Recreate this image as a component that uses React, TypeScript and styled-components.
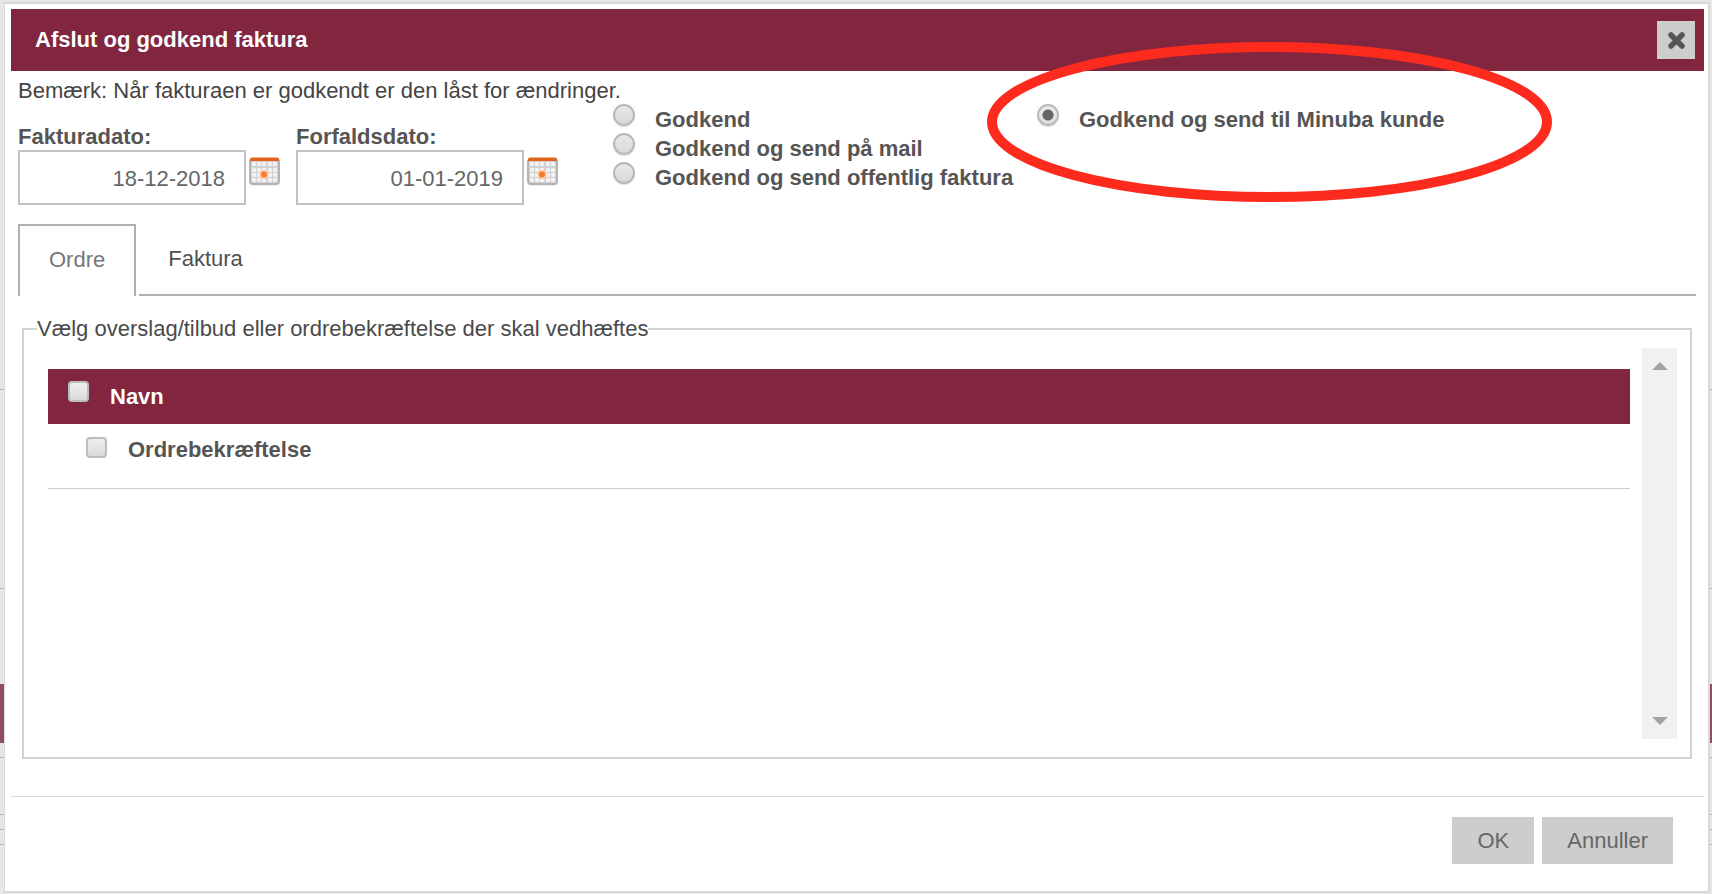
import React, { useState } from "react";
import styled, { createGlobalStyle, css } from "styled-components";

const maroon = "#82253f";

const GlobalStyle = createGlobalStyle`
  *, *::before, *::after { box-sizing: border-box; }
  body {
    margin: 0;
    background: #e6e6e6;
    color: #555;
    font-family: "Liberation Sans", Arial, sans-serif;
    font-size: 22px;
    line-height: 26px;
  }
  button, input { font: inherit; color: inherit; }
`;

const Screen = styled.div`
  display: grid;
  min-height: 100vh;
  > * { grid-area: 1 / 1; }
`;

const Backdrop = styled.div`
  display: flex;
  flex-direction: column;
  overflow: hidden;
`;

const BackdropRow = styled.div<{ $height: number; $kind?: "filled" | "plain" }>`
  flex: none;
  height: ${(p) => p.$height}px;
  ${(p) => p.$kind === "filled" && css`background: #904d61;`}
  ${(p) => !p.$kind && css`border-bottom: 1px solid #b4b4b4;`}
`;

const Dialog = styled.section`
  display: flex;
  flex-direction: column;
  margin: 2px 2px 1px 4px;
  padding: 5px 4px 0 6px;
  border: 2px solid #d8d8d8;
  border-left-width: 1px;
  background: #fff;
`;

const TitleBar = styled.header`
  display: flex;
  align-items: center;
  justify-content: space-between;
  height: 62px;
  padding: 0 9px 0 24px;
  background: ${maroon};
  color: #fff;
`;

const Title = styled.h1`
  margin: 0;
  font-size: 22px;
  font-weight: bold;
`;

const CloseButton = styled.button`
  display: grid;
  place-items: center;
  width: 38px;
  height: 38px;
  padding: 0;
  border: 0;
  background: #cdcdcd;
  color: #555;
`;

const Body = styled.div`
  display: flex;
  flex: 1;
  flex-direction: column;
  padding: 7px 8px 0 7px;
`;

const Note = styled.p`
  margin: 0;
  color: #444;
`;

const Settings = styled.div`
  display: flex;
  gap: 54px;
`;

const Dates = styled.div`
  display: flex;
  gap: 15px;
  padding-top: 20px;
`;

const DateField = styled.div`
  display: flex;
  flex-direction: column;
`;

const DateLabel = styled.label`
  font-weight: bold;
`;

const DateControl = styled.div`
  display: flex;
  align-items: flex-start;
  gap: 3px;
`;

const DateInput = styled.input`
  width: 228px;
  height: 55px;
  padding: 3px 19px 0 8px;
  border: 2px solid #c2c2c2;
  background: #fff;
  color: #666;
  text-align: right;
`;

const CalendarButton = styled.button`
  display: block;
  width: 32px;
  height: 36px;
  padding: 4px 0 0;
  border: 0;
  background: none;
  svg { display: block; }
`;

const Options = styled.div`
  display: grid;
  grid-template-columns: 424px auto;
  align-content: start;
`;

const OptionColumn = styled.div`
  display: flex;
  flex-direction: column;
`;

const Option = styled.label`
  position: relative;
  display: flex;
  align-items: flex-start;
  gap: 20px;
  height: 29px;
  font-weight: bold;
  white-space: nowrap;
`;

const OptionText = styled.span`
  padding-top: 3px;
`;

const Radio = styled.input`
  flex: none;
  appearance: none;
  width: 22px;
  height: 22px;
  margin: 0;
  border: 2px solid #b8b8b8;
  border-radius: 50%;
  background: linear-gradient(#e8e8e8, #d9d9d9);
  box-shadow: 0 1px 1px #ddd;
  &:checked {
    background:
      radial-gradient(circle, #666 5px, transparent 6px),
      linear-gradient(#eee, #dedede);
  }
`;

const Highlight = styled.svg`
  position: absolute;
  top: -62px;
  left: -50px;
  pointer-events: none;
`;

const TabList = styled.div`
  display: flex;
  height: 72px;
  margin-top: 19px;
`;

const Tab = styled.button<{ $active: boolean }>`
  padding: 0 29px;
  border: 0 solid #b0b0b0;
  background: none;
  color: #505050;
  border-bottom-width: 2px;
  ${(p) =>
    p.$active &&
    css`
      margin-right: 3px;
      padding: 0 29px 2px;
      border-width: 2px 2px 0;
      color: #777;
    `}
`;

const TabRule = styled.div`
  flex: 1;
  border-bottom: 2px solid #b0b0b0;
`;

const Attachments = styled.fieldset`
  display: flex;
  flex: 1;
  flex-direction: column;
  min-width: 0;
  margin: 20px 4px 0;
  padding: 6px 13px 18px;
  border: 2px solid #d2d2d2;
`;

const Legend = styled.legend`
  padding: 0;
  color: #4a4a4a;
`;

const ScrollArea = styled.div`
  display: flex;
  flex: 1;
  gap: 12px;
  padding-left: 11px;
`;

const DocumentTable = styled.table`
  flex: 1;
  align-self: flex-start;
  margin-top: 21px;
  border-collapse: collapse;
  font-weight: bold;
  text-align: left;
`;

const HeadCell = styled.th`
  height: 55px;
  padding: 12px 20px 0;
  background: ${maroon};
  color: #fff;
  vertical-align: top;
`;

const Cell = styled.td`
  height: 64px;
  padding: 13px 38px 0;
  border-bottom: 1px solid #ccc;
  vertical-align: top;
`;

const CheckLabel = styled.label`
  display: flex;
  align-items: flex-start;
  gap: 21px;
`;

const CheckText = styled.span<{ $heading?: boolean }>`
  padding-top: ${(p) => (p.$heading ? 3 : 0)}px;
`;

const Checkbox = styled.input`
  flex: none;
  appearance: none;
  width: 21px;
  height: 21px;
  margin: 0;
  border: 2px solid #bcbcbc;
  border-radius: 4px;
  background: linear-gradient(#eee, #dadada);
  &:checked { background: #777; }
`;

const ScrollRail = styled.div`
  display: flex;
  flex-direction: column;
  justify-content: space-between;
  width: 35px;
  padding: 14px 0;
  background: #f1f1f1;
`;

const ScrollButton = styled.button`
  display: block;
  height: 8px;
  padding: 0;
  border: 0;
  background: none;
  svg { display: block; margin: 0 auto; }
`;

const Footer = styled.footer`
  display: flex;
  justify-content: flex-end;
  gap: 8px;
  margin-top: 37px;
  padding: 20px 31px 27px;
  border-top: 1px solid #d8d8d8;
`;

const FooterButton = styled.button`
  height: 47px;
  padding: 0 25px;
  border: 0;
  background: #cdcdcd;
  color: #666;
`;

const CalendarIcon = () => (
  <svg width="32" height="34" viewBox="0 0 32 34" aria-hidden="true">
    <rect x="0" y="5" width="31" height="27" rx="4" fill="#000" opacity=".06" />
    <rect x="1" y="5" width="29" height="25" rx="3" fill="#d2d2d2" stroke="#b4b4b4" strokeWidth="2" />
    <g fill="#f3f3f3">
      {[8, 14, 19, 24].map((y) =>
        [3, 8, 13, 19, 24].map((x) => (
          <rect key={`${x}-${y}`} x={x} y={y} width="4" height="4" rx="1" />
        ))
      )}
    </g>
    <path d="M1 7V5.500q0-2 2-2h25q2 0 2 2V7z" fill="#e2621b" />
    <circle cx="15" cy="20.500" r="4.500" fill="#ffc79f" />
    <circle cx="15" cy="20.500" r="3" fill="#f87a2c" />
  </svg>
);

const Arrow = ({ up }: { up?: boolean }) => (
  <svg width="16" height="8" viewBox="0 0 16 8" aria-hidden="true">
    <path d={up ? "M0 8 8 0l8 8z" : "M0 0h16L8 8z"} fill="#a3a3a3" />
  </svg>
);

const backdropRows: { height: number; kind?: "filled" | "plain" }[] = [
  { height: 390 },
  { height: 199 },
  { height: 95, kind: "plain" },
  { height: 59, kind: "filled" },
  { height: 15 },
  { height: 57 },
  { height: 15 },
  { height: 15 },
];

const mainOptions = ["Godkend", "Godkend og send på mail", "Godkend og send offentlig faktura"];
const customerOption = "Godkend og send til Minuba kunde";
const tabs = ["Ordre", "Faktura"];

export default function App() {
  const [option, setOption] = useState(customerOption);
  const [tab, setTab] = useState("Ordre");

  const renderRadio = (name: string) => (
    <Radio
      type="radio"
      name="approval"
      checked={option === name}
      onChange={() => setOption(name)}
    />
  );

  return (
    <>
      <GlobalStyle />
      <Screen>
        <Backdrop aria-hidden="true">
          {backdropRows.map((row, i) => (
            <BackdropRow key={i} $height={row.height} $kind={row.kind} />
          ))}
        </Backdrop>
        <Dialog role="dialog" aria-labelledby="dialog-title">
          <TitleBar>
            <Title id="dialog-title">Afslut og godkend faktura</Title>
            <CloseButton type="button" aria-label="Luk">
              <svg width="20" height="20" viewBox="0 0 20 20" aria-hidden="true">
                <path
                  d="M5 5l11 11M16 5 5 16"
                  stroke="currentColor"
                  strokeWidth="5.500"
                  strokeLinecap="round"
                />
              </svg>
            </CloseButton>
          </TitleBar>
          <Body>
            <Note>Bemærk: Når fakturaen er godkendt er den låst for ændringer.</Note>
            <Settings>
              <Dates>
                <DateField>
                  <DateLabel htmlFor="invoice-date">Fakturadato:</DateLabel>
                  <DateControl>
                    <DateInput id="invoice-date" type="text" defaultValue="18-12-2018" />
                    <CalendarButton type="button" aria-label="Vælg fakturadato">
                      <CalendarIcon />
                    </CalendarButton>
                  </DateControl>
                </DateField>
                <DateField>
                  <DateLabel htmlFor="due-date">Forfaldsdato:</DateLabel>
                  <DateControl>
                    <DateInput id="due-date" type="text" defaultValue="01-01-2019" />
                    <CalendarButton type="button" aria-label="Vælg forfaldsdato">
                      <CalendarIcon />
                    </CalendarButton>
                  </DateControl>
                </DateField>
              </Dates>
              <Options role="radiogroup" aria-label="Godkendelse">
                <OptionColumn>
                  {mainOptions.map((name) => (
                    <Option key={name}>
                      {renderRadio(name)}
                      <OptionText>{name}</OptionText>
                    </Option>
                  ))}
                </OptionColumn>
                <OptionColumn>
                  <Option>
                    {renderRadio(customerOption)}
                    <OptionText>{customerOption}</OptionText>
                    <Highlight width="565" height="160" viewBox="0 0 565 160" aria-hidden="true">
                      <ellipse cx="282.5" cy="80" rx="277.5" ry="75" fill="none" stroke="#fd2b1d" strokeWidth="10" />
                    </Highlight>
                  </Option>
                </OptionColumn>
              </Options>
            </Settings>
            <TabList role="tablist">
              {tabs.map((name) => (
                <Tab
                  key={name}
                  type="button"
                  role="tab"
                  aria-selected={tab === name}
                  $active={tab === name}
                  onClick={() => setTab(name)}
                >
                  {name}
                </Tab>
              ))}
              <TabRule />
            </TabList>
            <Attachments>
              <Legend>Vælg overslag/tilbud eller ordrebekræftelse der skal vedhæftes</Legend>
              <ScrollArea>
                <DocumentTable>
                  <thead>
                    <tr>
                      <HeadCell scope="col">
                        <CheckLabel>
                          <Checkbox type="checkbox" />
                          <CheckText $heading>Navn</CheckText>
                        </CheckLabel>
                      </HeadCell>
                    </tr>
                  </thead>
                  <tbody>
                    <tr>
                      <Cell>
                        <CheckLabel>
                          <Checkbox type="checkbox" />
                          <CheckText>Ordrebekræftelse</CheckText>
                        </CheckLabel>
                      </Cell>
                    </tr>
                  </tbody>
                </DocumentTable>
                <ScrollRail>
                  <ScrollButton type="button" aria-label="Rul op">
                    <Arrow up />
                  </ScrollButton>
                  <ScrollButton type="button" aria-label="Rul ned">
                    <Arrow />
                  </ScrollButton>
                </ScrollRail>
              </ScrollArea>
            </Attachments>
          </Body>
          <Footer>
            <FooterButton type="button">OK</FooterButton>
            <FooterButton type="button">Annuller</FooterButton>
          </Footer>
        </Dialog>
      </Screen>
    </>
  );
}
